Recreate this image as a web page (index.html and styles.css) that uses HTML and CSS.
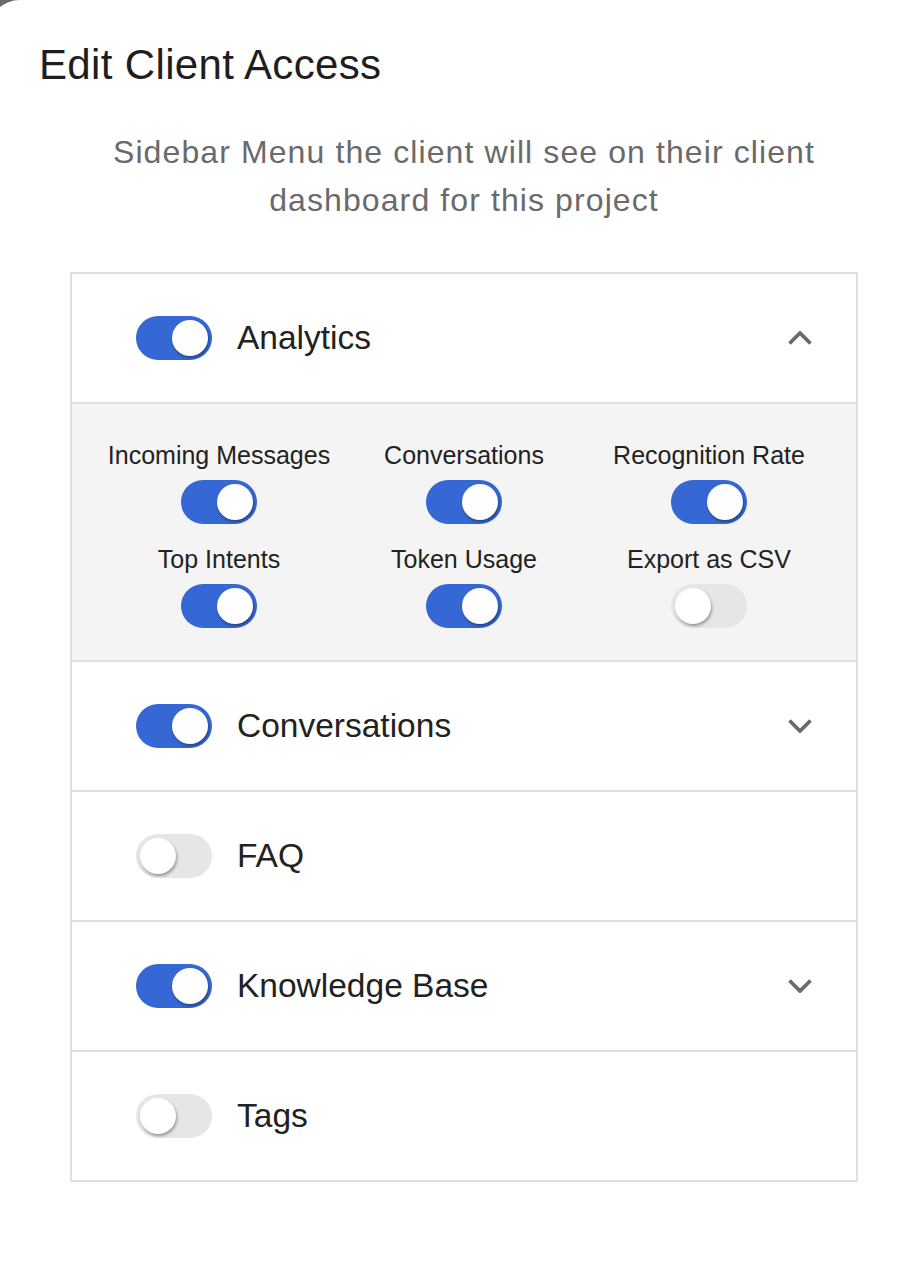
FILE: index.html
```html
<!DOCTYPE html>
<html lang="en">
<head>
<meta charset="utf-8">
<title>Edit Client Access</title>
<link rel="stylesheet" href="styles.css">
</head>
<body>
<div class="modal">
  <h1 class="title">Edit Client Access</h1>
  <div class="content">
    <p class="subtitle">Sidebar Menu the client will see on their client dashboard for this project</p>
    <div class="menu">
      <div class="row">
        <span class="toggle on"><span class="knob"></span></span>
        <span class="label">Analytics</span>
        <svg class="chev" viewBox="0 0 24 14" width="24" height="14"><polyline points="1.5,12.5 12,2 22.5,12.5"/></svg>
      </div>
      <div class="panel">
        <div class="item"><span class="sublabel">Incoming Messages</span><span class="toggle on"><span class="knob"></span></span></div>
        <div class="item"><span class="sublabel">Conversations</span><span class="toggle on"><span class="knob"></span></span></div>
        <div class="item"><span class="sublabel">Recognition Rate</span><span class="toggle on"><span class="knob"></span></span></div>
        <div class="item"><span class="sublabel">Top Intents</span><span class="toggle on"><span class="knob"></span></span></div>
        <div class="item"><span class="sublabel">Token Usage</span><span class="toggle on"><span class="knob"></span></span></div>
        <div class="item"><span class="sublabel">Export as CSV</span><span class="toggle"><span class="knob"></span></span></div>
      </div>
      <div class="row">
        <span class="toggle on"><span class="knob"></span></span>
        <span class="label">Conversations</span>
        <svg class="chev" viewBox="0 0 24 14" width="24" height="14"><polyline points="1.5,1.5 12,12 22.5,1.5"/></svg>
      </div>
      <div class="row">
        <span class="toggle"><span class="knob"></span></span>
        <span class="label">FAQ</span>
      </div>
      <div class="row">
        <span class="toggle on"><span class="knob"></span></span>
        <span class="label">Knowledge Base</span>
        <svg class="chev" viewBox="0 0 24 14" width="24" height="14"><polyline points="1.5,1.5 12,12 22.5,1.5"/></svg>
      </div>
      <div class="row">
        <span class="toggle"><span class="knob"></span></span>
        <span class="label">Tags</span>
      </div>
    </div>
  </div>
</div>
</body>
</html>
```

FILE: styles.css
```css
html, body {
  margin: 0;
  padding: 0;
}
body {
  background: #6a6a6a;
  overflow: hidden;
  font-family: "Liberation Sans", Arial, sans-serif;
  color: #1f1f1f;
}
.modal {
  margin-left: -12px;
  width: calc(100% + 12px);
  min-height: 1272px;
  background: #ffffff;
  border-top-left-radius: 32px;
  padding-top: 41px;
  box-sizing: border-box;
}
.title {
  margin: 0;
  padding-left: 51px;
  font-size: 42px;
  line-height: 48px;
  font-weight: 400;
  letter-spacing: 0.35px;
  color: #1e1e1e;
}
.content {
  margin-left: 82px;
  width: 788px;
}
.subtitle {
  margin: 39px 0 0;
  text-align: center;
  font-size: 32px;
  line-height: 48px;
  letter-spacing: 1.1px;
  color: #6a6a6a;
}
.menu {
  margin-top: 48px;
  border: 2px solid #dfdfdf;
}
.row {
  display: flex;
  align-items: center;
  height: 128px;
  padding: 0 44px 0 64px;
  border-bottom: 2px solid #dfdfdf;
}
.row:last-child {
  border-bottom: none;
}
.label {
  flex: 1;
  margin-left: 25px;
  font-size: 33.5px;
  color: #222222;
}
.chev {
  display: block;
  fill: none;
  stroke: #6b6b6b;
  stroke-width: 3.8;
}
.toggle {
  position: relative;
  display: block;
  flex: none;
  width: 76px;
  height: 44px;
  border-radius: 22px;
  background: #e6e6e6;
}
.toggle.on {
  background: #3568d4;
}
.knob {
  position: absolute;
  top: 4px;
  left: 4px;
  width: 36px;
  height: 36px;
  border-radius: 50%;
  background: #ffffff;
  box-shadow: 1px 2px 3px rgba(0, 0, 0, 0.35);
}
.toggle.on .knob {
  left: 36px;
}
.panel {
  display: grid;
  grid-template-columns: repeat(3, 245px);
  justify-content: center;
  row-gap: 20px;
  padding: 36px 0 32px;
  background: #f4f4f4;
  border-bottom: 2px solid #dfdfdf;
}
.item {
  display: flex;
  flex-direction: column;
  align-items: center;
}
.sublabel {
  font-size: 25px;
  line-height: 30px;
  color: #222222;
  white-space: nowrap;
}
.item .toggle {
  margin-top: 10px;
}
```
